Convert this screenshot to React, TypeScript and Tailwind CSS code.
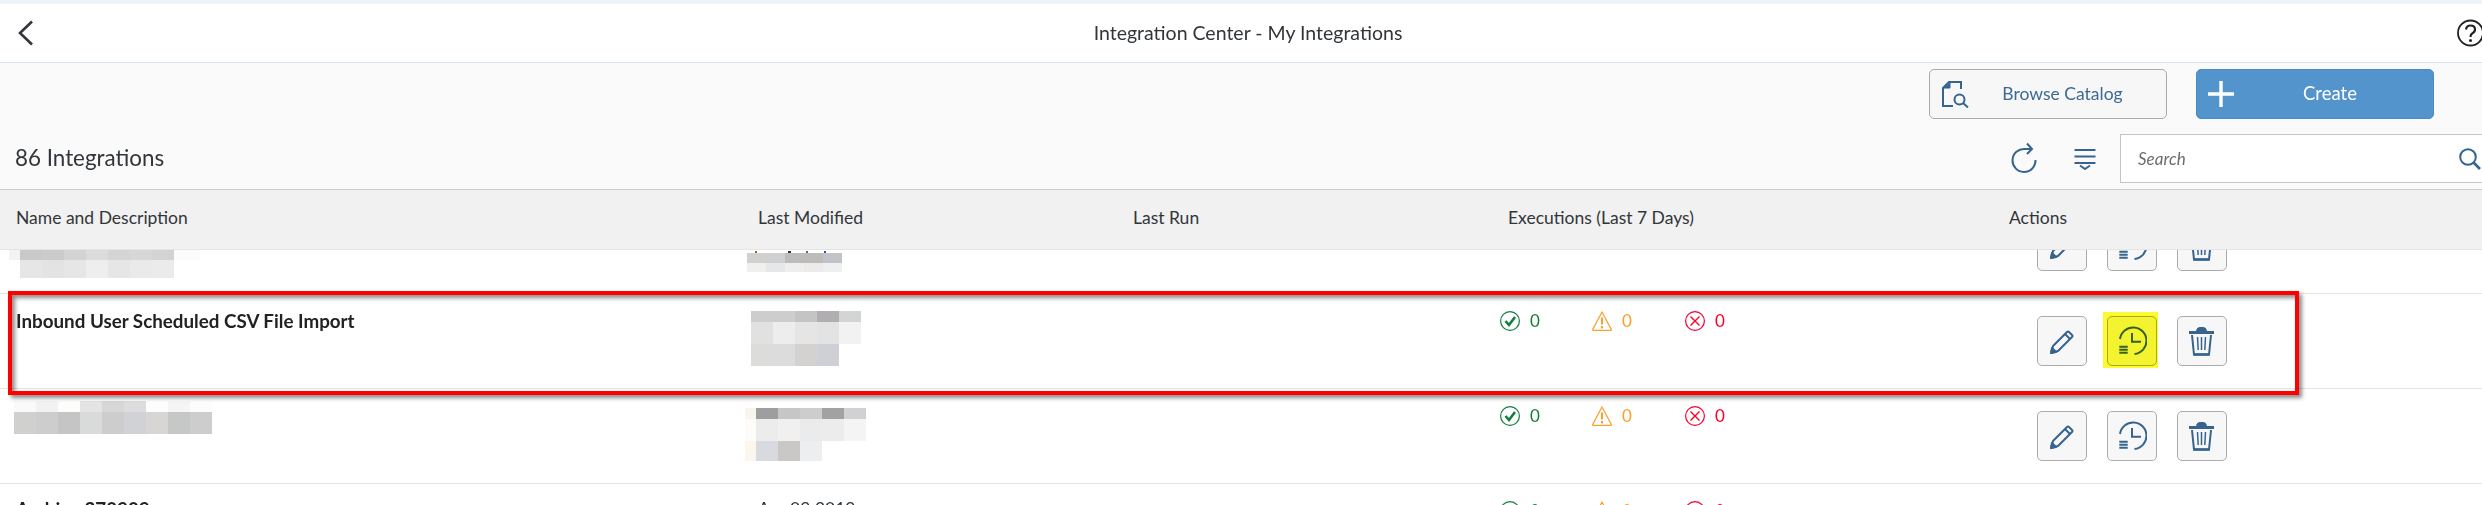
import React from "react";

type Line = { h: number; ml?: number; w?: number; cells: (string | [string, number])[] };

function Pixels({ lines }: { lines: Line[] }) {
  return (
    <div className="flex flex-col">
      {lines.map((l, i) => (
        <div key={i} className="flex" style={{ height: l.h, marginLeft: l.ml ?? 0 }}>
          {l.cells.map((c, j) => {
            const color = typeof c === "string" ? c : c[0];
            const width = typeof c === "string" ? l.w ?? 22 : c[1];
            return <div key={j} style={{ width, background: color }} />;
          })}
        </div>
      ))}
    </div>
  );
}

const BLUE = "#36648f";

function Pencil() {
  return (
    <svg width="26" height="27" viewBox="0 0 26 27" fill="none" stroke={BLUE} strokeWidth="2" strokeLinejoin="round">
      <path d="M2 25 L4 18 L18 4 Q19 3 20 4 L23 7 Q24 8 23 9 L9 23 Z" />
      <path d="M16 6 L21 11" />
      <path d="M2 25 L3 20 L7 24 Z" fill={BLUE} />
    </svg>
  );
}

function History() {
  return (
    <svg width="30" height="32" viewBox="0 0 30 32" fill="none" stroke={BLUE} strokeWidth="2">
      <path d="M3 14 A13.3 13.3 0 1 1 17.5 29" />
      <path d="M15 8 V16.7 H24" />
      <path d="M2.3 21.7 H10.7 M2.3 24.7 H10.7 M2.3 27.7 H10.7" />
    </svg>
  );
}

function Trash() {
  return (
    <svg width="28" height="31" viewBox="0 0 28 31" fill="none" stroke={BLUE}>
      <path d="M1 6.5 H26" strokeWidth="3" />
      <path d="M8.5 4.5 Q9 1.5 12 1.5 H15 Q18 1.5 18.5 4.5 Z" fill={BLUE} strokeWidth="1" />
      <path d="M4 9 L6 28.5 H21 L23 9" strokeWidth="2" />
      <path d="M5.5 28.5 H21.5" strokeWidth="2.5" />
      <path d="M9.5 11 L10.2 24 M13.5 11 V24 M17.5 11 L16.8 24" strokeWidth="1.5" />
    </svg>
  );
}

function ActionButton({ children }: { children: React.ReactNode }) {
  return (
    <div className="w-[50px] h-[50px] rounded-[5px] border border-[#ababab] bg-[#f7f7f7] flex items-center justify-center shrink-0">
      {children}
    </div>
  );
}

function Actions({ highlight }: { highlight?: boolean }) {
  return (
    <div className="flex items-start gap-5 pl-11 pt-[22px]">
      <ActionButton><Pencil /></ActionButton>
      <div className="relative">
        <ActionButton><History /></ActionButton>
        {highlight && (
          <div className="absolute -left-1 -top-1 w-[55px] h-[56px] bg-[#fbfb30] mix-blend-multiply" />
        )}
      </div>
      <ActionButton><Trash /></ActionButton>
    </div>
  );
}

function Status() {
  return (
    <div className="flex items-start pl-2 pt-[17px] text-[17px] leading-5">
      <div className="flex items-center w-[92px] gap-2.5 text-[#107e3e]">
        <svg width="20" height="20" viewBox="0 0 20 20" fill="none" stroke="#107e3e">
          <circle cx="10" cy="10" r="9.4" strokeWidth="1.2" />
          <path d="M5.5 10 L9 14 L15 6" strokeWidth="2.6" />
        </svg>
        <span>0</span>
      </div>
      <div className="flex items-center w-[93px] gap-2.5 text-[#fb9f2c]">
        <svg width="20" height="20" viewBox="0 0 20 20" fill="none" stroke="#fb9f2c">
          <path d="M10 1 L19.4 18.6 Q19.5 19.4 18.6 19.4 H1.4 Q0.5 19.4 0.6 18.6 Z" strokeWidth="1.2" strokeLinejoin="round" />
          <path d="M10 6.5 V13.5 M10 15 V17.5" strokeWidth="2" />
        </svg>
        <span>0</span>
      </div>
      <div className="flex items-center gap-2.5 text-[#f5002a]">
        <svg width="20" height="20" viewBox="0 0 20 20" fill="none" stroke="#f5002a">
          <circle cx="10" cy="10" r="9.4" strokeWidth="1.2" />
          <path d="M5.5 5.5 L14.5 14.5 M14.5 5.5 L5.5 14.5" strokeWidth="1.4" />
        </svg>
        <span>0</span>
      </div>
    </div>
  );
}

const ROW = "grid grid-cols-[742px_355px_395px_501px_1fr] h-[95px] border-b border-[#e5e5e5] bg-white shrink-0";

export default function App() {
  return (
    <div className="relative w-full h-[505px] overflow-hidden bg-white text-[#32363a] font-['Lato','Noto_Sans',sans-serif]">
      {/* top strip */}
      <div className="h-1 bg-[#edf3f8]" />

      {/* shell bar */}
      <div className="h-[59px] bg-white border-b border-[#d9e4ef] grid grid-cols-[1fr_auto_1fr] items-center">
        <div className="pl-[17px]">
          <svg width="18" height="26" viewBox="0 0 18 26" fill="none" stroke="#32363a" strokeWidth="2.6">
            <path d="M15 1.5 L3 13 L15 24.5" />
          </svg>
        </div>
        <div className="pl-[14px] text-[19.5px] leading-6 text-[#32363a]">Integration Center - My Integrations</div>
        <div className="flex justify-end -mr-[2px]">
          <svg width="27" height="28" viewBox="0 0 27 28" fill="none" stroke="#222">
            <circle cx="13.5" cy="14" r="12.5" strokeWidth="1.8" />
            <path d="M9 10.5 Q9.5 6.5 13.5 6.5 Q18 6.5 18 10.5 Q18 13 15.5 14.3 Q13.5 15.3 13.5 18" strokeWidth="2.2" />
            <circle cx="13.5" cy="21.5" r="1.5" fill="#222" stroke="none" />
          </svg>
        </div>
      </div>

      {/* toolbar */}
      <div className="h-[126px] bg-[#fafafa] pt-1.5 flex flex-col gap-[15px]">
        <div className="flex justify-end gap-[29px] pr-12">
          <div className="relative w-[238px] h-[50px] rounded-[5px] border border-[#ababab] bg-[#f7f7f7] flex items-center justify-center text-[17.5px] text-[#3d6a94]">
            <svg className="absolute left-[11px] top-[10px]" width="28" height="28" viewBox="0 0 28 28" fill="none" stroke={BLUE} strokeWidth="2">
              <path d="M20 9 V2 H8 L2 8 V26 H12" />
              <path d="M3 8 H9 V3 Z" fill={BLUE} strokeWidth="1" />
              <circle cx="18.5" cy="19.5" r="5" />
              <path d="M22 23 L27 27.5" />
            </svg>
            <span className="pl-[29px]">Browse Catalog</span>
          </div>
          <div className="relative w-[238px] h-[50px] rounded-[5px] border border-[#4a8bc5] bg-[#5494cd] flex items-center justify-center text-[18.5px] text-white">
            <svg className="absolute left-[11px] top-[11px]" width="26" height="26" viewBox="0 0 26 26" fill="none" stroke="#fff" strokeWidth="3.4">
              <path d="M13 0 V26 M0 13 H26" />
            </svg>
            <span className="pl-[30px]">Create</span>
          </div>
        </div>
        <div className="flex items-center h-[49px]">
          <div className="flex-1 pl-[15px] pb-[2px] text-[22.4px] leading-7">86 Integrations</div>
          <svg width="27" height="33" viewBox="0 0 27 33" fill="none" stroke={BLUE} strokeWidth="2">
            <path d="M21 7 H14 A11.5 11.5 0 1 0 24.5 18" />
            <path d="M16 1.5 L21 7 L16 12" />
          </svg>
          <svg className="ml-[36px] mr-[24px]" width="22" height="22" viewBox="0 0 22 22" fill="none" stroke={BLUE} strokeWidth="2">
            <path d="M0.5 2 H21.5 M0.5 8.5 H21.5 M0.5 15 H21.5" />
            <path d="M6 17.5 L11 21 L16 17.5" />
          </svg>
          <div className="w-[362px] h-[49px] bg-white border border-r-0 border-[#c4c4c4] flex items-center justify-between pl-[17px] pr-[1px]">
            <span className="italic text-[17px] text-[#6a6d70]">Search</span>
            <svg width="22" height="22" viewBox="0 0 22 22" fill="none" stroke={BLUE} strokeWidth="2">
              <circle cx="9" cy="9" r="7.8" />
              <path d="M14.5 14.5 L21 21" strokeWidth="2.6" />
            </svg>
          </div>
        </div>
      </div>

      {/* column headers */}
      <div className="h-[61px] pb-[3px] bg-[#f1f1f1] border-t border-b border-t-[#cccccc] border-b-[#e5e5e5] grid grid-cols-[742px_355px_395px_501px_1fr] items-center text-[17.5px] text-[#32363a] relative z-10">
        <div className="pl-4">Name and Description</div>
        <div className="pl-4">Last Modified</div>
        <div className="pl-9">Last Run</div>
        <div className="pl-4">Executions (Last 7 Days)</div>
        <div className="pl-4">Actions</div>
      </div>

      {/* rows */}
      <div className="-mt-[51px] flex flex-col">
        <div className={ROW}>
          <div className="pt-[50px] pl-[9px]">
            <Pixels lines={[
              { h: 11, cells: [["#f3f3f1", 11], "#c9c9c9", "#cbcbcb", "#d3d3d3", "#dcdcdc", "#d4d5d5", "#d6d7d7", "#d2d3d3", ["#fcfcfc", 26]] },
              { h: 18, ml: 11, cells: ["#e6e6e6", "#e3e3e3", "#e6e6e6", "#eeeeee", "#e6e6e6", "#eaeaea", "#ebebeb"] },
            ]} />
          </div>
          <div className="pt-[52px] pl-[5px]">
            <Pixels lines={[
              { h: 2, cells: [["#fff", 8], ["#8a6a3a", 2], ["#fff", 31], ["#333", 3], ["#fff", 15], ["#4a6a90", 2], ["#fff", 16], ["#2c5a8f", 2]] },
              { h: 10, w: 19, cells: ["#d2d1cf", "#cfd0d2", "#bdbcba", "#bebcba", "#c2c3c9"] },
              { h: 9, w: 19, cells: ["#f0f0ee", "#e7e7e7", "#eeeeee", "#ebebeb", "#eeeff1"] },
            ]} />
          </div>
          <div />
          <div />
          <Actions />
        </div>

        <div className={ROW}>
          <div className="pl-4 pt-[17px] text-[18.8px] leading-5 font-bold text-[#222]">Inbound User Scheduled CSV File Import</div>
          <div className="pt-[17px] pl-[9px]">
            <Pixels lines={[
              { h: 11, cells: ["#cdcdcd", "#cdcdcd", "#c4c4c4", "#b0aeb0", "#d3d5d5"] },
              { h: 22, cells: ["#e1e1e1", "#ededed", "#e5e5e5", "#e3e3e3", "#f2f2f2"] },
              { h: 22, cells: ["#dcdcdb", "#dcdcdc", "#d3d2d0", "#cfd0d5"] },
            ]} />
          </div>
          <div />
          <Status />
          <Actions highlight />
        </div>

        <div className={ROW}>
          <div className="pt-3 pl-[14px]">
            <Pixels lines={[
              { h: 11, cells: ["#fafafa", "#f2f2f2", "#fdfdfb", "#e4e4e4", "#d7d7d7", "#dddddd", "#fdfdfd", "#f5f5f5", "#fcfcfc"] },
              { h: 22, cells: ["#d0d0ce", "#cdcdcd", "#c5c5c5", "#d9dbdb", "#cdcdcd", "#d1d2d5", "#d8d6d4", "#c6c8c7", "#cdcdcd"] },
            ]} />
          </div>
          <div className="pt-[19px] pl-[3px]">
            <Pixels lines={[
              { h: 11, cells: [["#f8f4ee", 11], "#9e9e9f", "#c6c6c6", "#cdcdcd", "#a2a2a3", "#d1d1d3"] },
              { h: 22, cells: [["#fdfcf9", 11], "#ececec", "#f0f0f0", "#ebebeb", "#ececec", "#f4f4f4"] },
              { h: 20, cells: [["#fcf6ef", 11], "#d9dae0", "#c9c8c6", "#edeef0"] },
            ]} />
          </div>
          <div />
          <Status />
          <Actions />
        </div>

        <div className={ROW}>
          <div className="pl-4 pt-[15px] text-[18.8px] leading-5 font-bold text-[#222]">Archive 270909</div>
          <div className="pl-4 pt-[15px] text-[17.5px] leading-5">Apr 09 2019</div>
          <div />
          <Status />
          <Actions />
        </div>
      </div>

      {/* red annotation box */}
      <div className="absolute left-2 top-[291px] w-[2291px] h-[104px] border-4 border-[#ff0000] shadow-[3px_3px_4px_rgba(0,0,0,0.45),inset_3px_3px_4px_rgba(0,0,0,0.45)] z-20" />
    </div>
  );
}
